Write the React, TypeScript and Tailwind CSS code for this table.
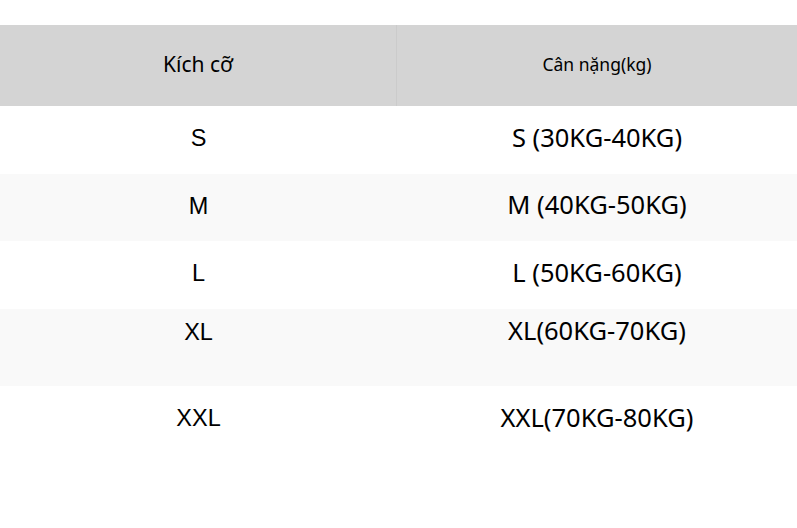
const rows = [
  { size: "S", weight: "S (30KG-40KG)", alt: false, h: "h-[68px]", top: false },
  { size: "M", weight: "M (40KG-50KG)", alt: true, h: "h-[67px]", top: false },
  { size: "L", weight: "L (50KG-60KG)", alt: false, h: "h-[68px]", top: false },
  { size: "XL", weight: "XL(60KG-70KG)", alt: true, h: "h-[77px]", top: true },
  { size: "XXL", weight: "XXL(70KG-80KG)", alt: false, h: "h-[68px]", top: false },
];

export default function App() {
  return (
    <div className="w-[797px] h-[528px] bg-white pt-[25px] text-black overflow-hidden">
      {/* header */}
      <div className="grid grid-cols-[397px_400px] h-[81px] bg-[#d4d4d4]">
        <div className="flex items-center justify-center border-r border-[#cbcbcb] font-['Noto_Sans',sans-serif] text-[21px] pb-[2px]">
          Kích cỡ
        </div>
        <div className="flex items-center justify-center font-['Noto_Sans',sans-serif] text-[17.5px] pb-[2px]">
          Cân nặng(kg)
        </div>
      </div>

      {rows.map((r) => (
        <div
          key={r.size}
          className={`grid grid-cols-[397px_400px] ${r.h} ${r.alt ? "bg-[#f9f9f9]" : "bg-white"}`}
        >
          <div
            className={`flex justify-center font-['Liberation_Sans',sans-serif] text-[23.5px] ${
              r.top ? "items-start pt-[6px]" : "items-center pb-[2px]"
            }`}
          >
            {r.size}
          </div>
          <div
            className={`flex justify-center font-['Noto_Sans',sans-serif] text-[25.5px] ${
              r.top ? "items-start pt-[2px]" : "items-center pb-[6px]"
            }`}
          >
            {r.weight}
          </div>
        </div>
      ))}
    </div>
  );
}
